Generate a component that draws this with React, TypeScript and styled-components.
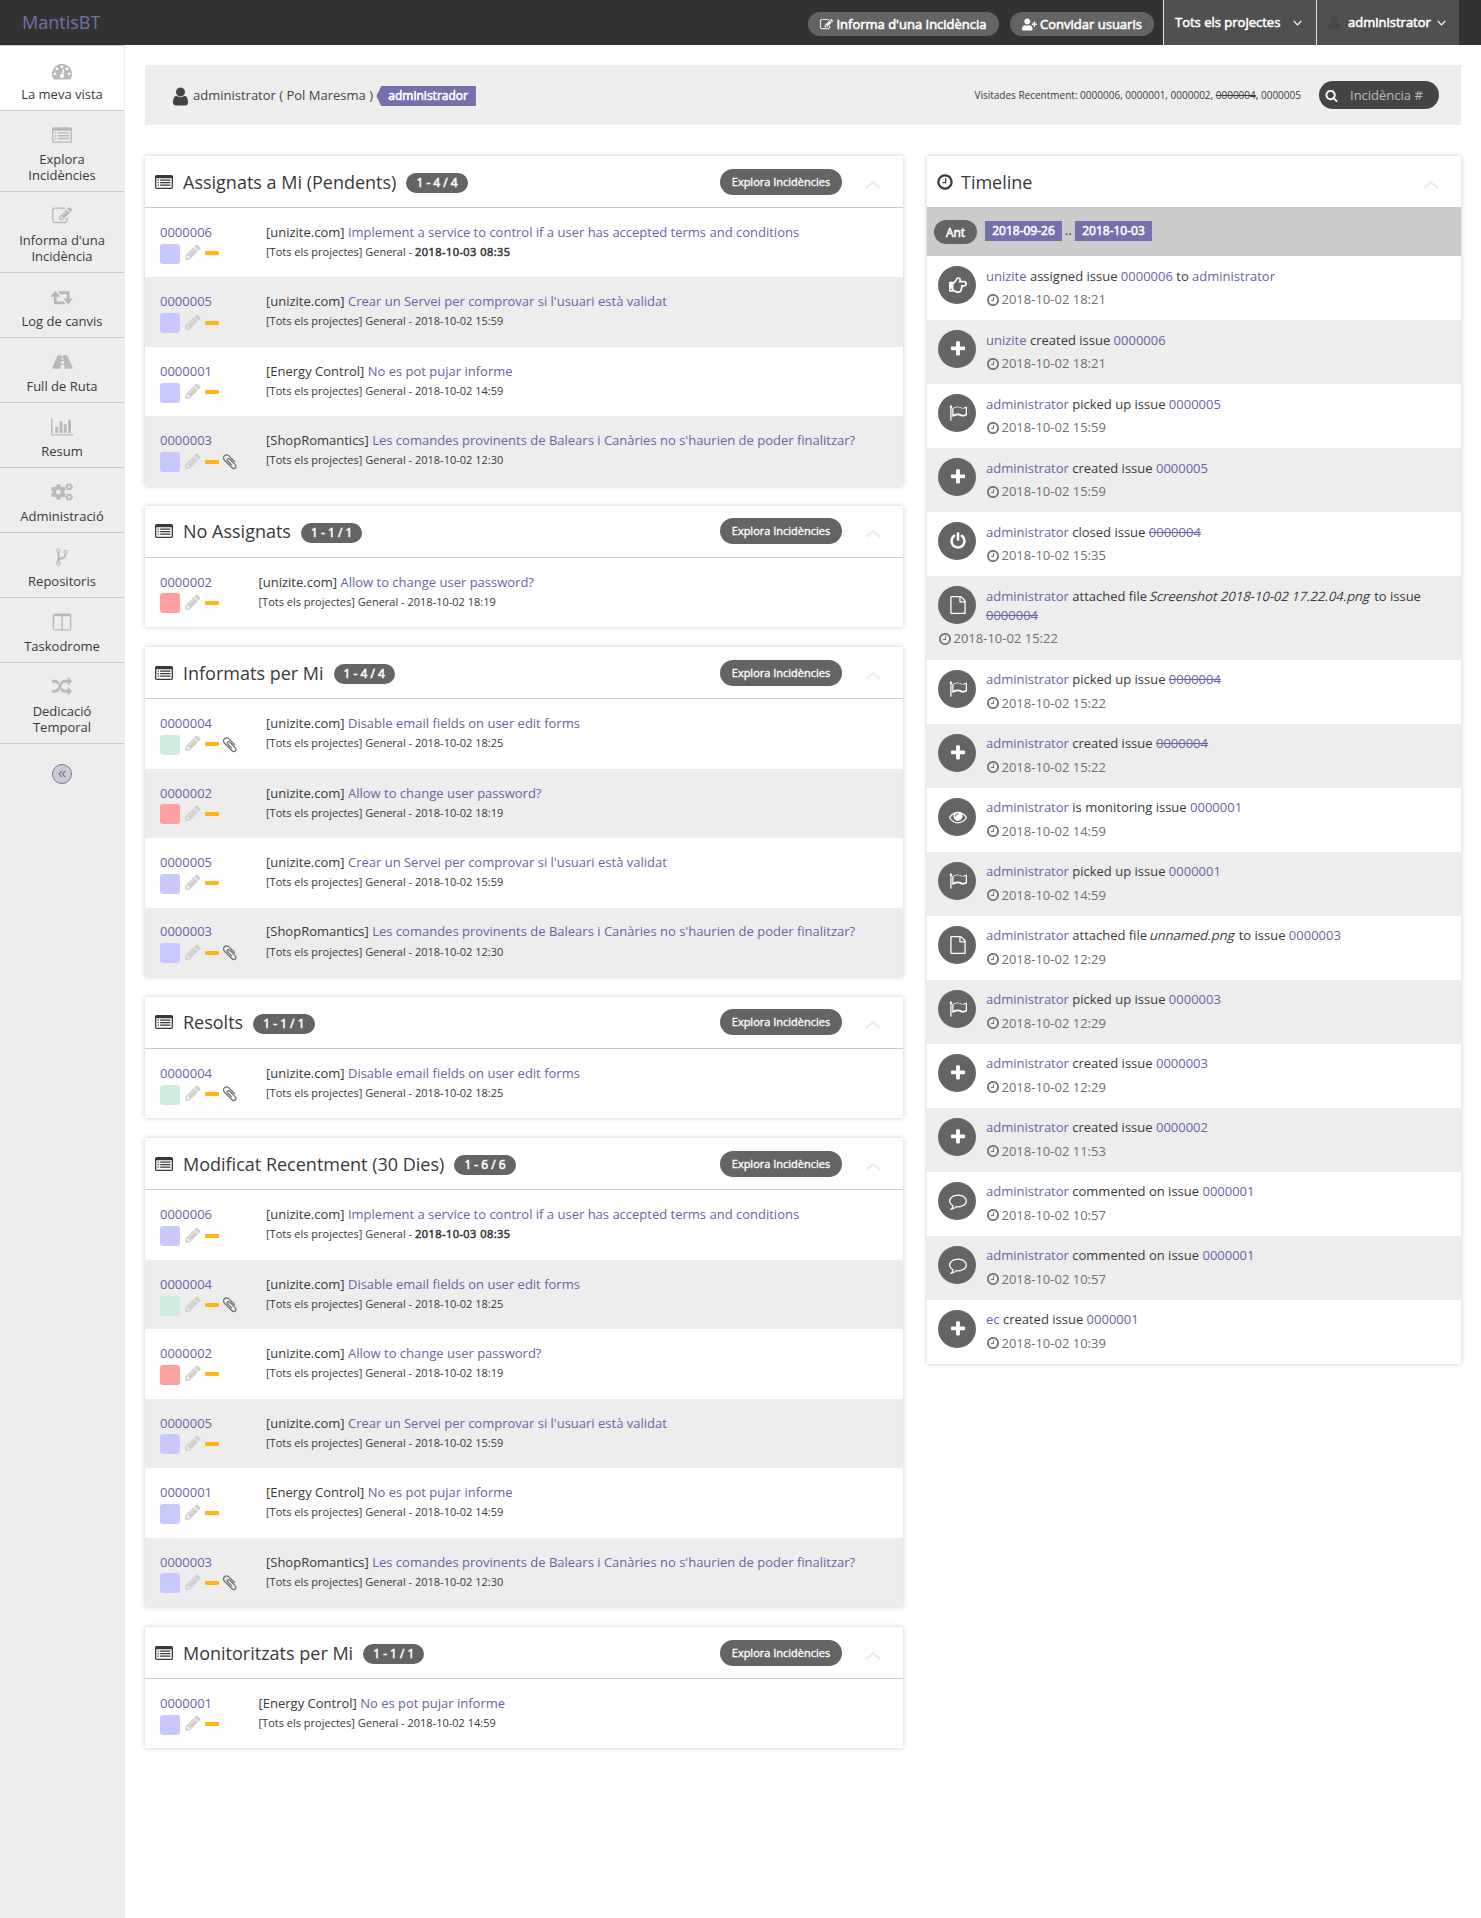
import React from "react";
import styled, { createGlobalStyle, css } from "styled-components";
import { FaCogs, FaRegHandPointRight, FaRoad, FaUserPlus } from "react-icons/fa";

const LINK = "#6765a6";
const ACCENT = "#7370ac";
const PILL = "#646464";

const Global = createGlobalStyle`
  *, *::before, *::after { box-sizing: border-box; }
  body {
    margin: 0;
    background: #fff;
    color: #393939;
    font-family: "Open Sans", "Noto Sans", sans-serif;
    font-size: 13px;
    line-height: 19.5px;
  }
`;

/* Regular glyph widths with thickened strokes */
const heavy = css`
  font-weight: 400;
  -webkit-text-stroke: 0.55px currentColor;
`;

/* ---------- icons ---------- */

const PATHS = {
  plus: "M1600 736v192q0 40-28 68t-68 28h-416v416q0 40-28 68t-68 28h-192q-40 0-68-28t-28-68v-416h-416q-40 0-68-28t-28-68v-192q0-40 28-68t68-28h416v-416q0-40 28-68t68-28h192q40 0 68 28t28 68v416h416q40 0 68 28t28 68z",
  clock: "M1024 544v448q0 14-9 23t-23 9h-320q-14 0-23-9t-9-23v-64q0-14 9-23t23-9h224v-352q0-14 9-23t23-9h64q14 0 23 9t9 23zm416 352q0-148-73-273t-198-198-273-73-273 73-198 198-73 273 73 273 198 198 273 73 273-73 198-198 73-273zm224 0q0 209-103 385.5t-279.5 279.5-385.5 103-385.5-103-279.5-279.5-103-385.5 103-385.5 279.5-279.5 385.5-103 385.5 103 279.5 279.5 103 385.5z",
  user: "M1536 1399q0 109-62.5 187t-150.5 78h-854q-88 0-150.5-78t-62.5-187q0-85 8.5-160.5t31.5-152 58.5-131 94-89 134.5-34.5q131 128 313 128t313-128q76 0 134.5 34.5t94 89 58.5 131 31.5 152 8.5 160.5zm-256-887q0 159-112.5 271.5t-271.5 112.5-271.5-112.5-112.5-271.5 112.5-271.5 271.5-112.5 271.5 112.5 112.5 271.5z",
  pencil: "M491 1536l91-91-235-235-91 91v107h128v128h107zm523-928q0-22-22-22-10 0-17 7l-542 542q-7 7-7 17 0 22 22 22 10 0 17-7l542-542q7-7 7-17zm-54-192l416 416-832 832h-416v-416zm683 96q0 53-37 90l-166 166-416-416 166-165q36-38 90-38 53 0 91 38l235 234q37 39 37 91z",
  edit: "M888 1184l116-116-152-152-116 116v56h96v96h56zm440-720q-16-16-33 1l-350 350q-17 17-1 33t33-1l350-350q17-17 1-33zm80 594v190q0 119-84.5 203.5t-203.5 84.5h-832q-119 0-203.5-84.5t-84.5-203.5v-832q0-119 84.5-203.5t203.5-84.5h832q63 0 117 25 15 7 18 23 3 17-9 29l-49 49q-14 14-32 8-23-6-45-6h-832q-66 0-113 47t-47 113v832q0 66 47 113t113 47h832q66 0 113-47t47-113v-126q0-13 9-22l64-64q15-15 35-7t20 29zm-96-738l288 288-672 672h-288v-288zm444 132l-92 92-288-288 92-92q28-28 68-28t68 28l152 152q28 28 28 68t-28 68z",
  search: "M1216 832q0-185-131.5-316.5t-316.5-131.5-316.5 131.5-131.5 316.5 131.5 316.5 316.5 131.5 316.5-131.5 131.5-316.5zm512 832q0 52-38 90t-90 38q-54 0-90-38l-343-342q-179 124-399 124-143 0-273.5-55.5t-225-150-150-225-55.5-273.5 55.5-273.5 150-225 225-150 273.5-55.5 273.5 55.5 225 150 150 225 55.5 273.5q0 220-124 399l343 343q37 37 37 90z",
  list: "M160 192h1472q66 0 113 47t47 113v1088q0 66-47 113t-113 47h-1472q-66 0-113-47t-47-113v-1088q0-66 47-113t113-47zM128 512v928q0 32 32 32h1472q32 0 32-32v-928zM256 640h128v128h-128zM512 640h1024v128h-1024zM256 896h128v128h-128zM512 896h1024v128h-1024zM256 1152h128v128h-128zM512 1152h1024v128h-1024z",
  retweet: "M1280 1504q0 13-9.5 22.5t-22.5 9.5h-960q-8 0-13.5-2t-9-7-5.5-8-3-11.5-1-11.5v-600h-192q-26 0-45-19t-19-45q0-24 15-41l320-384q19-22 49-22t49 22l320 384q15 17 15 41 0 26-19 45t-45 19h-192v384h576q16 0 25 11l160 192q7 10 7 21zm640-416q0 24-15 41l-320 384q-20 23-49 23t-49-23l-320-384q-15-17-15-41 0-26 19-45t45-19h192v-384h-576q-16 0-25-12l-160-192q-7-9-7-20 0-13 9.5-22.5t22.5-9.5h960q8 0 13.5 2t9 7 5.5 8 3 11.5 1 11.5v600h192q26 0 45 19t19 45z",
  gauge: "M384 1152q0-53-37.5-90.5t-90.5-37.5-90.5 37.5-37.5 90.5 37.5 90.5 90.5 37.5 90.5-37.5 37.5-90.5zm192-448q0-53-37.5-90.5t-90.5-37.5-90.5 37.5-37.5 90.5 37.5 90.5 90.5 37.5 90.5-37.5 37.5-90.5zm428 481l101-382q6-26-7.5-48.5t-38.5-29.5-48 6.5-30 39.5l-101 382q-60 5-107 43.5t-63 98.5q-20 77 20 146t117 89 146-20 89-117q16-60-6-117t-72-91zm660-33q0-53-37.5-90.5t-90.5-37.5-90.5 37.5-37.5 90.5 37.5 90.5 90.5 37.5 90.5-37.5 37.5-90.5zm-640-640q0-53-37.5-90.5t-90.5-37.5-90.5 37.5-37.5 90.5 37.5 90.5 90.5 37.5 90.5-37.5 37.5-90.5zm448 192q0-53-37.5-90.5t-90.5-37.5-90.5 37.5-37.5 90.5 37.5 90.5 90.5 37.5 90.5-37.5 37.5-90.5zm320 448q0 261-141 483-19 29-54 29h-1402q-35 0-54-29-141-221-141-483 0-182 71-348t191-286 286-191 348-71 348 71 286 191 191 286 71 348z",
  chart: "M640 896v512h-256v-512h256zm384-512v1024h-256v-1024h256zm1024 1152v128h-2048v-1536h128v1408h1920zm-640-896v768h-256v-768h256zm384-384v1152h-256v-1152h256z",
  columns: "M224 1536h608v-1152h-640v1120q0 13 9.5 22.5t22.5 9.5zm1376-32v-1120h-640v1152h608q13 0 22.5-9.5t9.5-22.5zm128-1216v1216q0 66-47 113t-113 47h-1344q-66 0-113-47t-47-113v-1216q0-66 47-113t113-47h1344q66 0 113 47t47 113z",
  random: "M666 481q-60 92-137 273-22-45-37-72.5t-40.5-63.5-51-56.5-63-35-81.5-14.5h-224q-14 0-23-9t-9-23v-192q0-14 9-23t23-9h224q250 0 410 225zm1126 799q0 14-9 23l-320 320q-9 9-23 9-13 0-22.5-9.5t-9.5-22.5v-192q-32 0-85 .5t-81 1-73-1-71-5-64-10.5-63-18.5-58-28.5-59-40-55-53.5-56-69.5q59-93 136-273 22 45 37 72.5t40.5 63.5 51 56.5 63 35 81.5 14.5h256v-192q0-14 9-23t23-9q12 0 24 10l319 319q9 9 9 23zm0-896q0 14-9 23l-320 320q-9 9-23 9-13 0-22.5-9.5t-9.5-22.5v-192h-256q-48 0-87 15t-69 45-51 61.5-45 77.5q-32 62-78 171-29 66-49.5 111t-54 105-64 100-74 83-90 68.5-106.5 42-128 16.5h-224q-14 0-23-9t-9-23v-192q0-14 9-23t23-9h224q48 0 87-15t69-45 51-61.5 45-77.5q32-62 78-171 29-66 49.5-111t54-105 64-100 74-83 90-68.5 106.5-42 128-16.5h256v-192q0-14 9-23t23-9q12 0 24 10l319 319q9 9 9 23z",
  fork: "M672 1472q0-40-28-68t-68-28-68 28-28 68 28 68 68 28 68-28 28-68zm0-1152q0-40-28-68t-68-28-68 28-28 68 28 68 68 28 68-28 28-68zm640 128q0-40-28-68t-68-28-68 28-28 68 28 68 68 28 68-28 28-68zm96 0q0 52-26 96.5t-70 69.5q-2 287-226 414-67 38-203 81-128 40-169.5 71t-41.5 100v26q44 25 70 69.5t26 96.5q0 80-56 136t-136 56-136-56-56-136q0-52 26-96.5t70-69.5v-820q-44-25-70-69.5t-26-96.5q0-80 56-136t136-56 136 56 56 136q0 52-26 96.5t-70 69.5v497q54-26 154-57 55-17 87.5-29.5t70.5-31 59-39.5 40.5-51 28-69.5 8.5-91.5q-44-25-70-69.5t-26-96.5q0-80 56-136t136-56 136 56 56 136z",
  power: "M1664 896q0 156-61 298t-164 245-245 164-298 61-298-61-245-164-164-245-61-298q0-182 80.5-343t226.5-270q43-32 95.5-25t83.5 50q32 42 24.5 94.5t-49.5 84.5q-98 74-151.5 181t-53.5 228q0 104 40.5 198.5t109.5 163.5 163.5 109.5 198.5 40.5 198.5-40.5 163.5-109.5 109.5-163.5 40.5-198.5q0-121-53.5-228t-151.5-181q-42-32-49.5-84.5t24.5-94.5q31-43 84-50t95 25q146 109 226.5 270t80.5 343zm-640-768v640q0 52-38 90t-90 38-90-38-38-90v-640q0-52 38-90t90-38 90 38 38 90z",
  file: "M1596 380q28 28 48 76t20 88v1152q0 40-28 68t-68 28h-1344q-40 0-68-28t-28-68v-1600q0-40 28-68t68-28h896q40 0 88 20t76 48zm-444-244v376h376q-10-29-22-41l-313-313q-12-12-41-22zm384 1528v-1024h-416q-40 0-68-28t-28-68v-416h-768v1536h1280z",
  eye: "M1664 960q-152-236-381-353 61 104 61 225 0 185-131.5 316.5t-316.5 131.5-316.5-131.5-131.5-316.5q0-121 61-225-229 117-381 353 133 205 333.5 326.5t434.5 121.5 434.5-121.5 333.5-326.5zm-720-384q0-20-14-34t-34-14q-125 0-214.5 89.5t-89.5 214.5q0 20 14 34t34 14 34-14 14-34q0-86 61-147t147-61q20 0 34-14t14-34zm848 384q0 34-20 69-140 230-376.5 368.5t-499.5 138.5-499.5-139-376.5-368q-20-35-20-69t20-69q140-229 376.5-368t499.5-139 499.5 139 376.5 368q20 35 20 69z",
  comment: "M896 384q-204 0-381.5 69.5t-282 187.5-104.5 255q0 112 71.5 213.5t201.5 175.5l87 50-27 96q-24 91-70 172 152-63 275-171l43-38 57 6q69 8 130 8 204 0 381.5-69.5t282-187.5 104.5-255-104.5-255-282-187.5-381.5-69.5zm896 512q0 174-120 321.5t-326 233-450 85.5q-70 0-145-8-198 175-460 242-49 14-114 22h-5q-15 0-27-10.5t-16-27.5v-1q-3-4-.5-12t2-10 4.5-9.5l6-9 7-8.5 8-9q7-8 31-34.5t34.5-38 31-39.5 32.5-51 27-59 26-76q-157-89-247.5-220t-90.5-281q0-130 71-248.5t191-204.5 286-136.5 348-50.5 348 50.5 286 136.5 191 204.5 71 248.5z",
  flag: "M1664 985v-616q-169 91-306 91-82 0-145-32-100-49-184-76.5t-178-27.5q-173 0-403 127v599q245-113 433-113 55 0 103.5 7.5t98 26 77 31 82.5 39.5l28 14q44 22 101 22 120 0 293-92zm-1344-729q0 35-17.5 64t-46.5 46v1266q0 14-9 23t-23 9h-64q-14 0-23-9t-9-23v-1266q-29-17-46.5-46t-17.5-64q0-53 37.5-90.5t90.5-37.5 90.5 37.5 37.5 90.5zm1472 64v763q0 39-35 57-10 5-17 9-218 116-369 116-88 0-158-35l-28-14q-64-33-99-48t-91-29-114-14q-102 0-235.5 44t-228.5 102q-15 9-33 9-16 0-32-8-32-19-32-56v-742q0-35 31-55 35-21 78.5-42.5t114-52 152.5-49.5 155-19q112 0 209 31t209 86q38 19 89 19 122 0 310-112 22-12 31-17 31-16 62 2 31 20 31 55z",
  clip: "M1596 1385q0 117-79 196t-196 79q-135 0-235-100l-777-776q-113-115-113-271 0-159 110-270t269-111q158 0 273 113l605 606q10 10 10 22 0 16-30.5 46.5t-46.5 30.5q-13 0-23-10l-606-607q-79-77-181-77-106 0-179 75t-73 181q0 105 76 181l776 777q63 63 145 63 64 0 106-42t42-106q0-82-63-145l-581-581q-26-24-60-24-29 0-48 19t-19 48q0 32 25 59l410 410q10 10 10 22 0 16-31 47t-47 31q-12 0-22-10l-410-410q-63-61-63-149 0-82 57-139t139-57q88 0 149 63l581 581q100 98 100 235z",
};

type Glyph = keyof typeof PATHS;

const Svg = styled.svg`
  display: block;
  flex: none;
  fill: currentColor;
`;

function Icon({ name, size, wide = 1792 }: { name: Glyph; size: number; wide?: number }) {
  return (
    <Svg width={(size * wide) / 1792} height={size} viewBox={`0 0 ${wide} 1792`}>
      <path fillRule={name === "list" ? "evenodd" : "nonzero"} d={PATHS[name]} />
    </Svg>
  );
}

const Stroke = styled(Svg)`
  fill: none;
  stroke: currentColor;
`;

/* ---------- top bar ---------- */

const TopBar = styled.header`
  display: flex;
  height: 45px;
  background: #323232;
  color: #fff;
`;

const Brand = styled.a`
  flex: 1;
  padding-left: 22px;
  font-size: 18px;
  line-height: 45px;
  color: ${ACCENT};
`;

const TopActions = styled.div`
  display: flex;
  gap: 11px;
  padding: 12px 9px 0 0;
`;

const TopButton = styled.a<{ $w: number }>`
  ${heavy}
  display: flex;
  align-items: center;
  justify-content: center;
  gap: 3px;
  width: ${(p) => p.$w}px;
  height: 24px;
  padding-top: 1px;
  border-radius: 12px;
  background: ${PILL};
  white-space: nowrap;
`;

const TopMenu = styled.div<{ $w: number; $pad: number }>`
  ${heavy}
  display: flex;
  align-items: center;
  width: ${(p) => p.$w}px;
  height: 45px;
  padding: 1px 0 0 ${(p) => p.$pad}px;
  border-left: 1px solid #e1e1e1;
  background: #505050;
  white-space: nowrap;
`;

const Avatar = styled.span`
  display: flex;
  margin-right: 6px;
  color: #484848;
`;

const Caret = styled.span<{ $gap: number }>`
  display: flex;
  margin-left: ${(p) => p.$gap}px;
`;

/* ---------- shell ---------- */

const Shell = styled.div`
  display: flex;
  min-height: 1873px;
`;

const Sidebar = styled.nav`
  width: 125px;
  padding-right: 1px;
  background: #ededed;
`;

const NavItem = styled.a<{ $active?: boolean }>`
  display: flex;
  flex-direction: column;
  align-items: center;
  gap: ${(p) => (p.$active ? 5 : 6)}px;
  padding: ${(p) => (p.$active ? 16 : 14)}px 12px 8px;
  border-bottom: 1px solid #c9c9c9;
  background: ${(p) => (p.$active ? "#fff" : "transparent")};
  box-shadow: ${(p) => (p.$active ? "inset 0 1px #c9c9c9" : "none")};
  line-height: 16px;
  text-align: center;
`;

const NavIcon = styled.span`
  display: flex;
  align-items: center;
  height: 20px;
  color: #b9b9b9;
`;

const Collapse = styled.div`
  display: flex;
  align-items: center;
  justify-content: center;
  width: 20px;
  height: 20px;
  margin: 20px auto 0 52px;
  border: 1px solid ${ACCENT};
  border-radius: 50%;
  background: #ccc;
  color: ${ACCENT};
`;

const Main = styled.main`
  flex: 1;
  padding: 20px 20px 0;
`;

const Crumbs = styled.div`
  display: flex;
  align-items: center;
  height: 60px;
  margin-bottom: 31px;
  padding: 0 22px 0 25px;
  background: #eee;
`;

const CrumbUser = styled.div`
  display: flex;
  align-items: center;
  flex: 1;
  gap: 2px;
  padding-top: 2px;
  color: #444;
  white-space: pre;
`;

const RoleTag = styled.span`
  ${heavy}
  height: 20px;
  margin-left: -2px;
  padding: 0 8px 0 12px;
  background: ${ACCENT};
  clip-path: polygon(5px 0, 100% 0, 100% 100%, 5px 100%, 0 50%);
  color: #fff;
  font-size: 12px;
  line-height: 19px;
`;

const Recent = styled.div`
  margin-right: 18px;
  padding-top: 1px;
  font-size: 10px;
`;

const Search = styled.div`
  display: flex;
  align-items: center;
  gap: 12px;
  width: 120px;
  height: 28px;
  padding-left: 6px;
  border-radius: 14px;
  background: #444;
  color: #fff;
  span { padding-top: 1px; color: #bdbdbd; }
`;

/* ---------- panels ---------- */

const Columns = styled.div`
  display: grid;
  grid-template-columns: 758px 534px;
  gap: 24px;
  align-items: start;
`;

const Stack = styled.div`
  display: grid;
  gap: 20px;
`;

const Panel = styled.section`
  background: #fff;
  box-shadow: 0 0 5px rgba(0, 0, 0, 0.2);
`;

const PanelHead = styled.header<{ $plain?: boolean }>`
  display: flex;
  align-items: center;
  height: ${(p) => (p.$plain ? 51 : 52)}px;
  padding: 0 22px 0 ${(p) => (p.$plain ? 9 : 10)}px;
  border-bottom: ${(p) => (p.$plain ? "none" : "1px solid #c8c8c8")};
`;

const Title = styled.h4<{ $gap: number }>`
  margin: 0 0 0 ${(p) => p.$gap}px;
  font-size: 18px;
  font-weight: 400;
  line-height: 26px;
`;

const Badge = styled.span`
  ${heavy}
  height: 20px;
  margin: 3px 0 0 10px;
  padding: 0 10px;
  border-radius: 10px;
  background: ${PILL};
  color: #fff;
  font-size: 12px;
  line-height: 20.5px;
`;

const Spacer = styled.span`
  flex: 1;
`;

const Browse = styled.a`
  width: 122px;
  height: 26px;
  margin-right: 23px;
  border-radius: 13px;
  background: ${PILL};
  color: #fff;
  font-size: 11px;
  line-height: 26px;
  text-align: center;
  -webkit-text-stroke: 0.35px currentColor;
`;

const Fold = styled.span`
  display: flex;
  margin-top: 4px;
  color: #f3f3f3;
  filter: drop-shadow(0 1px 0 #e2e2e2);
`;

const Row = styled.div<{ $alt: boolean; $narrow: boolean }>`
  display: grid;
  grid-template-columns: ${(p) => (p.$narrow ? 98.5 : 106)}px 1fr;
  height: 69.45px;
  padding: 14.95px 15px 0;
  background: ${(p) => (p.$alt ? "#ededed" : "#fff")};
`;

const Link = styled.a<{ $done?: boolean }>`
  color: ${LINK};
  text-decoration: ${(p) => (p.$done ? "line-through" : "none")};
`;

const Markers = styled.div`
  display: flex;
  align-items: center;
  height: 20px;
  margin-top: 1.3px;
`;

const Swatch = styled.span<{ $color: string }>`
  width: 20px;
  height: 20px;
  margin-right: 4px;
  border-radius: 3px;
  background: ${(p) => p.$color};
`;

const Pencil = styled.span`
  display: flex;
  margin: -3px 3px 0 0;
  color: #d0d0d0;
`;

const Dash = styled.span`
  width: 14px;
  height: 4px;
  margin-top: -1px;
  border-radius: 1px;
  background: #ffb70f;
`;

const Clip = styled.span`
  display: flex;
  margin: -1px 0 0 2px;
  color: #707070;
`;

const Meta = styled.div`
  margin-top: -0.4px;
  font-size: 11px;
`;

const Fresh = styled.span`
  ${heavy}
  letter-spacing: 0.45px;
`;

/* ---------- timeline ---------- */

const Range = styled.div`
  display: flex;
  height: 49px;
  padding: 13px 7px 0;
  background: #cbcbcb;
`;

const Previous = styled.a`
  ${heavy}
  width: 43px;
  height: 24px;
  margin-right: 8px;
  border-radius: 12px;
  background: ${PILL};
  color: #fff;
  font-size: 12px;
  line-height: 25px;
  text-align: center;
`;

const DateTag = styled.span`
  ${heavy}
  width: 77px;
  height: 20px;
  margin-top: 1px;
  background: ${ACCENT};
  color: #fff;
  font-size: 12px;
  line-height: 19px;
  text-align: center;
`;

const Dots = styled.span`
  width: 13px;
  padding-top: 1px;
  text-align: center;
`;

const Entry = styled.div<{ $alt: boolean; $tall: boolean }>`
  height: ${(p) => (p.$tall ? 83.6 : 64)}px;
  padding: 10px 11px;
  background: ${(p) => (p.$alt ? "#ededed" : "#fff")};
`;

const Bullet = styled.span`
  float: left;
  display: flex;
  align-items: center;
  justify-content: center;
  width: 38px;
  height: 38px;
  margin-right: 10px;
  padding-left: 2px;
  border-radius: 50%;
  background: ${PILL};
  color: #fff;
`;

const Action = styled.div`
  padding-top: 0.7px;
  line-height: 19px;
`;

/* Slanted upright glyphs keep the regular advance widths */
const FileName = styled.span`
  display: inline-block;
  transform: skewX(-14deg);
`;

const When = styled.div`
  display: flex;
  align-items: center;
  gap: 1.5px;
  margin-top: 4.4px;
  color: #707070;
`;

/* ---------- data ---------- */

const BLUE = "#c8c8ff";
const RED = "#ff9f9f";
const GREEN = "#ccecdc";

type Issue = { id: string; color: string; project: string; title: string; date: string; clip?: boolean; fresh?: boolean };

const ISSUES: Record<number, Issue> = {
  1: { id: "0000001", color: BLUE, project: "Energy Control", title: "No es pot pujar informe", date: "2018-10-02 14:59" },
  2: { id: "0000002", color: RED, project: "unizite.com", title: "Allow to change user password?", date: "2018-10-02 18:19" },
  3: { id: "0000003", color: BLUE, project: "ShopRomantics", title: "Les comandes provinents de Balears i Canàries no s'haurien de poder finalitzar?", date: "2018-10-02 12:30", clip: true },
  4: { id: "0000004", color: GREEN, project: "unizite.com", title: "Disable email fields on user edit forms", date: "2018-10-02 18:25", clip: true },
  5: { id: "0000005", color: BLUE, project: "unizite.com", title: "Crear un Servei per comprovar si l'usuari està validat", date: "2018-10-02 15:59" },
  6: { id: "0000006", color: BLUE, project: "unizite.com", title: "Implement a service to control if a user has accepted terms and conditions", date: "2018-10-03 08:35", fresh: true },
};

const PANELS = [
  { title: "Assignats a Mi (Pendents)", count: "1 - 4 / 4", rows: [6, 5, 1, 3] },
  { title: "No Assignats", count: "1 - 1 / 1", rows: [2] },
  { title: "Informats per Mi", count: "1 - 4 / 4", rows: [4, 2, 5, 3] },
  { title: "Resolts", count: "1 - 1 / 1", rows: [4] },
  { title: "Modificat Recentment (30 Dies)", count: "1 - 6 / 6", rows: [6, 4, 2, 5, 1, 3] },
  { title: "Monitoritzats per Mi", count: "1 - 1 / 1", rows: [1] },
];

type Event = { kind: string; who: string; verb: string; issue: number; time: string; done?: boolean; file?: string; to?: string; tall?: boolean };

const EVENTS: Event[] = [
  { kind: "assign", who: "unizite", verb: "assigned issue", issue: 6, time: "18:21", to: "administrator" },
  { kind: "plus", who: "unizite", verb: "created issue", issue: 6, time: "18:21" },
  { kind: "flag", who: "administrator", verb: "picked up issue", issue: 5, time: "15:59" },
  { kind: "plus", who: "administrator", verb: "created issue", issue: 5, time: "15:59" },
  { kind: "power", who: "administrator", verb: "closed issue", issue: 4, time: "15:35", done: true },
  { kind: "file", who: "administrator", verb: "attached file", file: "Screenshot 2018-10-02 17.22.04.png", issue: 4, time: "15:22", done: true, tall: true },
  { kind: "flag", who: "administrator", verb: "picked up issue", issue: 4, time: "15:22", done: true },
  { kind: "plus", who: "administrator", verb: "created issue", issue: 4, time: "15:22", done: true },
  { kind: "eye", who: "administrator", verb: "is monitoring issue", issue: 1, time: "14:59" },
  { kind: "flag", who: "administrator", verb: "picked up issue", issue: 1, time: "14:59" },
  { kind: "file", who: "administrator", verb: "attached file", file: "unnamed.png", issue: 3, time: "12:29" },
  { kind: "flag", who: "administrator", verb: "picked up issue", issue: 3, time: "12:29" },
  { kind: "plus", who: "administrator", verb: "created issue", issue: 3, time: "12:29" },
  { kind: "plus", who: "administrator", verb: "created issue", issue: 2, time: "11:53" },
  { kind: "comment", who: "administrator", verb: "commented on issue", issue: 1, time: "10:57" },
  { kind: "comment", who: "administrator", verb: "commented on issue", issue: 1, time: "10:57" },
  { kind: "plus", who: "ec", verb: "created issue", issue: 1, time: "10:39" },
];

const NAV = [
  { label: "La meva vista", icon: <Icon name="gauge" size={20} />, active: true },
  { label: "Explora Incidències", icon: <Icon name="list" size={20} /> },
  { label: "Informa d'una Incidència", icon: <Icon name="edit" size={20} /> },
  { label: "Log de canvis", icon: <Icon name="retweet" size={20} wide={1920} /> },
  { label: "Full de Ruta", icon: <FaRoad style={{ width: 21, height: 18 }} /> },
  { label: "Resum", icon: <Icon name="chart" size={20} wide={2048} /> },
  { label: "Administració", icon: <FaCogs style={{ width: 22, height: 20 }} /> },
  { label: "Repositoris", icon: <Icon name="fork" size={20} /> },
  { label: "Taskodrome", icon: <Icon name="columns" size={20} /> },
  { label: "Dedicació Temporal", icon: <Icon name="random" size={20} /> },
];

/* ---------- pieces ---------- */

function FoldToggle() {
  return (
    <Fold>
      <Stroke width="16" height="8" viewBox="0 0 16 8" strokeWidth="1.6">
        <path d="M1 7L8 1.4L15 7" />
      </Stroke>
    </Fold>
  );
}

function DownCaret({ gap }: { gap: number }) {
  return (
    <Caret $gap={gap}>
      <Stroke width="9" height="6" viewBox="0 0 9 6" strokeWidth="1.2">
        <path d="M.7 .8L4.5 4.8L8.3 .8" />
      </Stroke>
    </Caret>
  );
}

function IssueRow({ issue, alt, narrow }: { issue: Issue; alt: boolean; narrow: boolean }) {
  return (
    <Row $alt={alt} $narrow={narrow}>
      <div>
        <Link>{issue.id}</Link>
        <Markers>
          <Swatch $color={issue.color} />
          <Pencil><Icon name="pencil" size={18} /></Pencil>
          <Dash />
          {issue.clip && <Clip><Icon name="clip" size={17.5} /></Clip>}
        </Markers>
      </div>
      <div>
        <div>[{issue.project}] <Link>{issue.title}</Link></div>
        <Meta>
          [Tots els projectes] General - {issue.fresh ? <Fresh>{issue.date}</Fresh> : issue.date}
        </Meta>
      </div>
    </Row>
  );
}

function TimelineEntry({ event, alt }: { event: Event; alt: boolean }) {
  return (
    <Entry $alt={alt} $tall={!!event.tall}>
      <Bullet>
        {event.kind === "assign" ? <FaRegHandPointRight size={18} /> : <Icon name={event.kind as Glyph} size={18} />}
      </Bullet>
      <Action>
        <Link>{event.who}</Link> {event.verb} {event.file && <><FileName>{event.file}</FileName> to issue </>}
        <Link $done={event.done}>{ISSUES[event.issue].id}</Link>
        {event.to && <> to <Link>{event.to}</Link></>}
      </Action>
      <When>
        <Icon name="clock" size={14} />2018-10-02 {event.time}
      </When>
    </Entry>
  );
}

export default function App() {
  return (
    <>
      <Global />
      <TopBar>
        <Brand>MantisBT</Brand>
        <TopActions>
          <TopButton $w={191}><Icon name="edit" size={13} />Informa d'una Incidència</TopButton>
          <TopButton $w={144}><FaUserPlus style={{ width: 15, height: 13 }} />Convidar usuaris</TopButton>
        </TopActions>
        <TopMenu $w={153} $pad={11}>Tots els projectes<DownCaret gap={13} /></TopMenu>
        <TopMenu $w={143} $pad={9}>
          <Avatar><Icon name="user" size={16} /></Avatar>administrator<DownCaret gap={6} />
        </TopMenu>
        <div style={{ width: 22 }} />
      </TopBar>
      <Shell>
        <Sidebar>
          {NAV.map((n) => (
            <NavItem key={n.label} $active={n.active}>
              <NavIcon>{n.icon}</NavIcon>
              {n.label}
            </NavItem>
          ))}
          <Collapse>
            <Stroke width="8" height="8" viewBox="0 0 8 8" strokeWidth="1.1">
              <path d="M4 .8L1 4L4 7.2M7.4 .8L4.4 4L7.4 7.2" />
            </Stroke>
          </Collapse>
        </Sidebar>
        <Main>
          <Crumbs>
            <CrumbUser>
              <Icon name="user" size={21} />
              <span>administrator ( Pol Maresma ) </span>
              <RoleTag>administrador</RoleTag>
            </CrumbUser>
            <Recent>
              Visitades Recentment: 0000006, 0000001, 0000002, <s>0000004</s>, 0000005
            </Recent>
            <Search><Icon name="search" size={13} /><span>Incidència #</span></Search>
          </Crumbs>
          <Columns>
            <Stack>
              {PANELS.map((p) => (
                <Panel key={p.title}>
                  <PanelHead>
                    <Icon name="list" size={18} />
                    <Title $gap={10}>{p.title}</Title>
                    <Badge>{p.count}</Badge>
                    <Spacer />
                    <Browse>Explora Incidències</Browse>
                    <FoldToggle />
                  </PanelHead>
                  {p.rows.map((n, i) => (
                    <IssueRow
                      key={n}
                      issue={ISSUES[n]}
                      alt={i % 2 === 1}
                      narrow={p.rows.every((r) => !ISSUES[r].clip)}
                    />
                  ))}
                </Panel>
              ))}
            </Stack>
            <Panel>
              <PanelHead $plain>
                <Icon name="clock" size={18} />
                <Title $gap={7}>Timeline</Title>
                <Spacer />
                <FoldToggle />
              </PanelHead>
              <Range>
                <Previous>Ant</Previous>
                <DateTag>2018-09-26</DateTag>
                <Dots>..</Dots>
                <DateTag>2018-10-03</DateTag>
              </Range>
              {EVENTS.map((e, i) => (
                <TimelineEntry key={i} event={e} alt={i % 2 === 1} />
              ))}
            </Panel>
          </Columns>
        </Main>
      </Shell>
    </>
  );
}
